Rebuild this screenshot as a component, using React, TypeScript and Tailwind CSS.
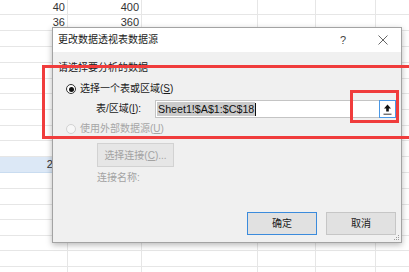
import React from "react";

const rowHeights = [
  "h-[15px]", "h-[16px]", "h-[16px]", "h-[16px]", "h-[16px]", "h-[15px]",
  "h-[16px]", "h-[16px]", "h-[15px]", "h-[16px]", "h-[16px]", "h-[16px]",
  "h-[16px]", "h-[15px]", "h-[16px]", "h-[15px]", "h-[16px]", "h-[16px]",
];
const colWidths = ["w-[68px]", "w-[74px]", "w-[116px]", "w-[58px]", "w-[60px]", "w-[60px]"];

function Sheet() {
  return (
    <div className="flex flex-col">
      {rowHeights.map((h, r) => (
        <div key={r} className={`flex ${h}`}>
          {colWidths.map((w, c) => {
            let text = "";
            if (r === 0 && c === 0) text = "40";
            if (r === 0 && c === 1) text = "400";
            if (r === 1 && c === 0) text = "36";
            if (r === 1 && c === 1) text = "360";
            if (r === 10 && c === 0) text = "216";
            const hl = r === 10 && c < 2;
            return (
              <div
                key={c}
                className={`${w} shrink-0 border-r border-b border-[#e6e6e6] flex items-center justify-end pr-[2px] text-[11px] leading-none text-[#333] ${hl ? "bg-[#dce8f6] border-b-[#c9dcf0]" : ""}`}
              >
                {text}
              </div>
            );
          })}
        </div>
      ))}
    </div>
  );
}

function Radio({ checked, disabled }: { checked?: boolean; disabled?: boolean }) {
  return (
    <div
      className={`w-[10px] h-[10px] rounded-full border flex items-center justify-center shrink-0 ${disabled ? "border-[#d2d2d2] bg-[#f7f7f7]" : "border-[#333] bg-white"}`}
    >
      {checked && <div className="w-[5px] h-[5px] rounded-full bg-[#111]" />}
    </div>
  );
}

export default function App() {
  return (
    <div
      className="relative w-[409px] h-[272px] overflow-hidden bg-white"
      style={{ fontFamily: '"Liberation Sans", "Noto Sans CJK SC", sans-serif' }}
    >
      <Sheet />

      {/* Dialog */}
      <div className="absolute left-[52px] top-[27px] w-[350px] h-[216px] border border-[#a3a3a3] bg-[#f0f0f0] shadow-[0_2px_6px_rgba(0,0,0,0.28)] flex flex-col text-[10px] text-[#1a1a1a]">
        <div className="h-[24px] bg-white flex items-center pl-[5px] shrink-0">
          <span className="leading-[14px]">更改数据透视表数据源</span>
          <div className="ml-auto mr-[8px] flex items-center gap-[20px]">
            <span className="w-[20px] text-center text-[11px] text-[#444]">?</span>
            <div className="w-[20px] flex justify-center">
              <svg width="10" height="10" viewBox="0 0 10 10">
                <path d="M0.5 0.5 L9.5 9.5 M9.5 0.5 L0.5 9.5" stroke="#555" strokeWidth="0.9" fill="none" />
              </svg>
            </div>
          </div>
        </div>

        <div className="flex-1 flex flex-col">
          <div className="mt-[9px] pl-[5px] leading-[14px] text-[#222]">请选择要分析的数据</div>

          <div className="mt-[7px] h-[14px] flex items-center pl-[13px] gap-[4px]">
            <Radio checked />
            <span className="leading-[14px]">
              选择一个表或区域(<span className="underline">S</span>)
            </span>
          </div>

          <div className="mt-[4px] h-[18px] flex items-center pl-[43px]">
            <div className="w-[59px] leading-[14px]">
              表/区域(<span className="underline">I</span>):
            </div>
            <div className="w-[242px] h-[18px] flex">
              <div className="flex-1 h-full border border-r-0 border-[#c4c4c4] bg-white flex items-center pl-[1px]">
                <span className="bg-[#cbcbcb] text-[10.7px] leading-[14px] text-[#111] px-[1px]">Sheet1!$A$1:$C$18</span>
                <span className="w-px h-[13px] bg-[#111]" />
              </div>
              <div className="w-[17px] h-[18px] border border-[#4a98e6] bg-white flex items-center justify-center">
                <svg width="11" height="13" viewBox="0 0 11 13">
                  <path d="M5.5 1.5 L9 5.5 L6.8 5.5 L6.8 8.5 L4.2 8.5 L4.2 5.5 L2 5.5 Z" fill="#111" />
                  <path d="M1.5 11.2 L9.5 11.2" stroke="#333" strokeWidth="1" />
                </svg>
              </div>
              <div className="w-px h-full bg-[#c4c4c4]" />
            </div>
          </div>

          <div className="mt-[4px] h-[14px] flex items-center pl-[13px] gap-[4px] text-[#a6a6a6]">
            <Radio disabled />
            <span className="leading-[14px]">
              使用外部数据源(<span className="underline">U</span>)
            </span>
          </div>

          <div className="mt-[7px] ml-[44px] w-[77px] h-[24px] border border-[#d2d2d2] bg-[#e6e6e6] flex items-center justify-center text-[#a3a3a3]">
            选择连接(<span className="underline">C</span>)...
          </div>

          <div className="mt-[4px] ml-[44px] leading-[14px] text-[#a3a3a3]">连接名称:</div>

          <div className="mt-auto mb-[7px] pr-[5px] flex justify-end gap-[9px]">
            <div className="w-[70px] h-[23px] border-[1.5px] border-[#3b8bdc] bg-[#e1e1e1] flex items-center justify-center">
              确定
            </div>
            <div className="w-[70px] h-[23px] border border-[#c6c6c6] bg-[#e1e1e1] flex items-center justify-center">
              取消
            </div>
          </div>
        </div>

        <svg className="absolute right-[1px] bottom-[1px]" width="8" height="8" viewBox="0 0 8 8">
          <rect x="6" y="2" width="1" height="1" fill="#9a9a9a" />
          <rect x="4" y="4" width="1" height="1" fill="#9a9a9a" />
          <rect x="6" y="4" width="1" height="1" fill="#9a9a9a" />
          <rect x="2" y="6" width="1" height="1" fill="#9a9a9a" />
          <rect x="4" y="6" width="1" height="1" fill="#9a9a9a" />
          <rect x="6" y="6" width="1" height="1" fill="#9a9a9a" />
        </svg>
      </div>

      {/* Red annotation boxes */}
      <div className="absolute left-[42px] top-[65px] w-[380px] h-[74px] border-[3px] border-[#f03c3c]" />
      <div className="absolute left-[350px] top-[90px] w-[49px] h-[33px] border-[3px] border-[#f03c3c]" />
    </div>
  );
}
